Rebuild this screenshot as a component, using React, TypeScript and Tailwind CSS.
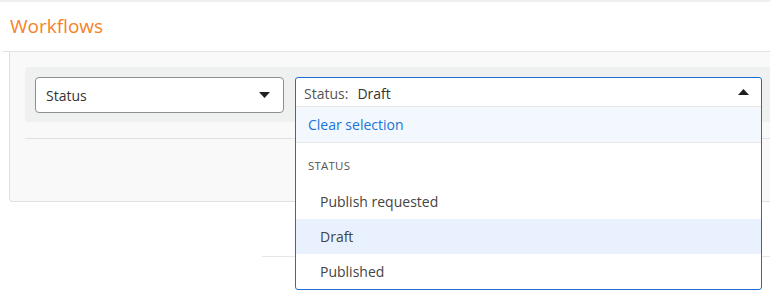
import React from "react";

function Caret({ up }: { up?: boolean }) {
  return (
    <svg width="11" height="6" viewBox="0 0 11 6" className="block">
      {up ? (
        <path d="M0 6 L5.5 0 L11 6 Z" fill="#1f1f1f" />
      ) : (
        <path d="M0 0 L11 0 L5.5 6 Z" fill="#1f1f1f" />
      )}
    </svg>
  );
}

export default function App() {
  const font = { fontFamily: '"Open Sans", "Noto Sans", sans-serif' };
  return (
    <div className="w-[770px] h-[292px] overflow-hidden bg-white relative" style={font}>
      <div className="h-[2px] bg-[#efefef]" />
      <div className="h-[49px] flex items-center pl-[10px]">
        <span className="text-[19px] font-normal text-[#f5822a] leading-none">Workflows</span>
      </div>
      <div className="ml-[2px] border-t border-[#e2e2e2]" />
      <div className="ml-[9px] h-[150px] border-l border-b border-[#e0e0e0] rounded-bl-[4px] bg-[#f9f9f9] pt-[15px] pl-[15px]">
        <div className="h-[55px] bg-[#eff0f0] rounded-l-[4px] pl-[10px] pt-[10px] flex gap-[11px] items-start">
          <div className="w-[249px] h-[36px] bg-white border border-[#8e8e8e] rounded-[4px] flex items-center justify-between pl-[10px] pr-[13px]">
            <span className="text-[14px] text-[#333]">Status</span>
            <Caret />
          </div>
          <div className="relative w-[467px] h-[36px]">
            <div className="absolute left-0 top-0 w-[467px] bg-white border border-[#1d6fcf] rounded-[3px] z-10">
              <div className="h-[29px] flex items-center justify-between pl-[8px] pr-[12px] border-b border-[#e6e6e6]">
                <div className="text-[14px] flex items-center gap-[9px] mt-[3px]">
                  <span className="text-[#555]">Status:</span>
                  <span className="text-[#333]">Draft</span>
                </div>
                <Caret up />
              </div>
              <div className="h-[36px] bg-[#f3f8fe] flex items-center pl-[12px] border-b border-[#e6e6e6]">
                <span className="text-[14px] text-[#1a73d8]">Clear selection</span>
              </div>
              <div className="h-[41px] flex items-center pl-[12px] pt-[5px]">
                <span className="text-[11.5px] text-[#555] tracking-[0.2px]">STATUS</span>
              </div>
              <div className="h-[35px] flex items-center pl-[24px]">
                <span className="text-[14px] text-[#444]">Publish requested</span>
              </div>
              <div className="h-[35px] flex items-center pl-[24px] bg-[#e8f1fd]">
                <span className="text-[14px] text-[#444]">Draft</span>
              </div>
              <div className="h-[35px] flex items-center pl-[24px]">
                <span className="text-[14px] text-[#444]">Published</span>
              </div>
            </div>
          </div>
        </div>
        <div className="mt-[16px] border-t border-[#e2e2e2]" />
      </div>
      <div className="mt-[54px] ml-[262px] border-t border-[#e6e6e6]" />
    </div>
  );
}
